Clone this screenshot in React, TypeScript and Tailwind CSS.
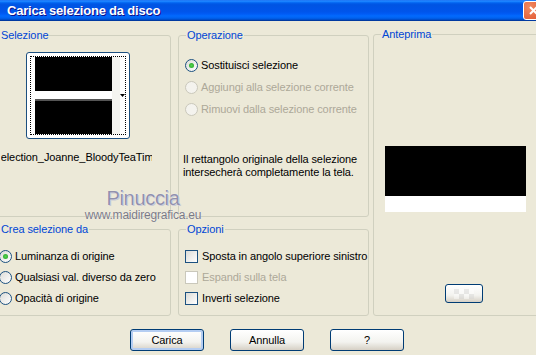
import React from 'react';

const FONT = "font-['Liberation_Sans',Arial,sans-serif]";

const GroupBox: React.FC<{ label: string; className?: string; children?: React.ReactNode }> = ({ label, className = '', children }) => (
  <div className={`relative border border-[#d0d0bf] rounded-[3px] shrink-0 ${className}`}>
    <span className="absolute -top-[7px] left-[7px] bg-[#ece9d8] px-[1px] leading-[13px] text-[#0046d5] whitespace-nowrap">
      {label}
    </span>
    {children}
  </div>
);

const Radio: React.FC<{ checked?: boolean; disabled?: boolean; label: string }> = ({ checked, disabled, label }) => (
  <div className="flex items-center h-[13px] gap-[3px] whitespace-nowrap">
    <span
      className={`w-[13px] h-[13px] rounded-full border flex items-center justify-center shrink-0 ${
        disabled
          ? 'border-[#cac8bb] bg-[#f4f3ee]'
          : 'border-[#1c5180] bg-[linear-gradient(135deg,#dcdcd7,#ffffff)]'
      }`}
    >
      {checked && <span className="w-[5px] h-[5px] rounded-full bg-[radial-gradient(circle,#55d351,#21a121)]" />}
    </span>
    <span className={disabled ? 'text-[#aca899]' : 'text-black'}>{label}</span>
  </div>
);

const Check: React.FC<{ disabled?: boolean; label: string }> = ({ disabled, label }) => (
  <div className="flex items-center h-[13px] gap-[4px] whitespace-nowrap">
    <span
      className={`w-[13px] h-[13px] border shrink-0 ${
        disabled ? 'border-[#cac8bb] bg-white' : 'border-[#1c5180] bg-[linear-gradient(135deg,#dcdcd7,#ffffff)]'
      }`}
    />
    <span className={disabled ? 'text-[#aca899]' : 'text-black'}>{label}</span>
  </div>
);

const XpButton: React.FC<{ label: string; def?: boolean; className?: string }> = ({ label, def, className = '' }) => (
  <div
    className={`h-[22px] w-[74px] shrink-0 rounded-[3px] border border-[#003c74] flex items-center justify-center bg-[linear-gradient(to_bottom,#ffffff,#f3f3ef_60%,#d6d0c5)] ${
      def ? 'shadow-[inset_0_0_0_2px_#b4cdf2]' : ''
    } ${className}`}
  >
    {label}
  </div>
);

export default function App() {
  return (
    <div className={`w-[536px] h-[355px] overflow-hidden bg-[#ece9d8] relative text-[11px] tracking-[-0.1px] ${FONT}`}>
      {/* Title bar */}
      <div className="h-[21px] flex items-center justify-between bg-[linear-gradient(to_bottom,#0058ee_0%,#3593ff_4%,#127dff_8%,#0262ee_14%,#0057e5_20%,#0054e3_24%,#0055eb_56%,#005bf5_66%,#026afe_76%,#0062ef_86%,#0052d6_92%,#0040ab_96%,#003092_100%)]">
        <span className="pl-[7px] text-white font-bold text-[13px] tracking-[-0.2px] [text-shadow:1px_1px_0_#0f1089]">
          Carica selezione da disco
        </span>
        <div className="w-[21px] h-[19px] -mr-[8px] shrink-0 rounded-[3px] border border-white bg-[radial-gradient(circle_at_30%_30%,#f08a63,#e0512a)] flex items-center justify-center">
          <svg width="11" height="11" viewBox="0 0 11 11">
            <path d="M2 2 L9 9 M9 2 L2 9" stroke="white" strokeWidth="2" />
          </svg>
        </div>
      </div>

      {/* Groups */}
      <div className="flex pt-[14px] -ml-[8px] w-[560px]">
        <div className="flex flex-col w-[179px] shrink-0 gap-[12px]">
          <GroupBox label="Selezione" className="h-[182px]">
            <div className="pt-[16px] pl-[33px]">
              <div className="w-[104px] h-[87px] rounded-[3px] border border-[#1c4f7f] bg-white p-[3px]">
                <div className="w-full h-full border border-dotted border-black flex">
                  <div className="pl-[4px] flex flex-col w-[84px]">
                    <div className="h-[34px] bg-black" />
                    <div className="h-[8px] bg-white" />
                    <div className="h-[2px] bg-[#555555]" />
                    <div className="flex-1 bg-black" />
                  </div>
                  <div className="w-[8px] bg-[#f4f4f0]" />
                  <div className="flex-1 flex items-center justify-center">
                    <svg width="5" height="3" viewBox="0 0 5 3"><path d="M0 0 H5 L2.5 3 Z" fill="black" /></svg>
                  </div>
                </div>
              </div>
            </div>
            <div className="mt-[10px] ml-[8px] w-[151px] overflow-hidden flex justify-center whitespace-nowrap">
              <span className="shrink-0">Selection_Joanne_BloodyTeaTime</span>
            </div>
          </GroupBox>
          <GroupBox label="Crea selezione da" className="h-[87px]">
            <div className="pt-[20px] pl-[6px] flex flex-col gap-[8px]">
              <Radio checked label="Luminanza di origine" />
              <Radio label="Qualsiasi val. diverso da zero" />
              <Radio label="Opacità di origine" />
            </div>
          </GroupBox>
        </div>

        <div className="flex flex-col w-[191px] shrink-0 ml-[7px] gap-[12px]">
          <GroupBox label="Operazione" className="h-[182px]">
            <div className="pt-[23px] pl-[6px] flex flex-col gap-[9px]">
              <Radio checked label="Sostituisci selezione" />
              <Radio disabled label="Aggiungi alla selezione corrente" />
              <Radio disabled label="Rimuovi dalla selezione corrente" />
            </div>
            <p className="mt-[37px] pl-[4px] leading-[13px] whitespace-nowrap">
              Il rettangolo originale della selezione
              <br />
              intersecherà completamente la tela.
            </p>
          </GroupBox>
          <GroupBox label="Opzioni" className="h-[87px]">
            <div className="pt-[20px] pl-[6px] flex flex-col gap-[8px]">
              <Check label="Sposta in angolo superiore sinistro" />
              <Check disabled label="Espandi sulla tela" />
              <Check label="Inverti selezione" />
            </div>
          </GroupBox>
        </div>

        <GroupBox label="Anteprima" className="w-[175px] h-[282px] ml-[4px] -mt-[1px]">
          <div className="pt-[111px] pl-[11px]">
            <div className="w-[141px] h-[50px] bg-black" />
            <div className="w-[141px] h-[16px] bg-white" />
          </div>
          <div className="mt-[72px] ml-[71px] w-[38px] h-[19px] rounded-[3px] border border-[#003c74] bg-[linear-gradient(to_bottom,#ffffff,#f3f3ef_60%,#d6d0c5)] flex items-center justify-center">
            <div className="w-[20px] h-[10px] opacity-40 bg-[conic-gradient(#ffffff_25%,#d0d0d0_0_50%,#ffffff_0_75%,#d0d0d0_0)] bg-[length:10px_10px]" />
          </div>
        </GroupBox>
      </div>

      {/* Buttons */}
      <div className="flex pl-[130px] mt-[13px] gap-[26px]">
        <XpButton label="Carica" def className="w-[73px]" />
        <XpButton label="Annulla" />
        <XpButton label="?" />
      </div>

      {/* Watermark */}
      <div className="absolute left-[82px] top-[187px] w-[122px] flex flex-col items-center pointer-events-none">
        <span className="text-[20px] leading-[22px] tracking-[-0.3px] text-[#9191ae] [text-shadow:0_0_1px_#ffffff,1px_1px_0_#c8c8d4]">Pinuccia</span>
        <span className="text-[12px] leading-[12px] tracking-[-0.2px] text-[#7a7a85] [text-shadow:0_0_1px_#ffffff]">www.maidiregrafica.eu</span>
      </div>
    </div>
  );
}
